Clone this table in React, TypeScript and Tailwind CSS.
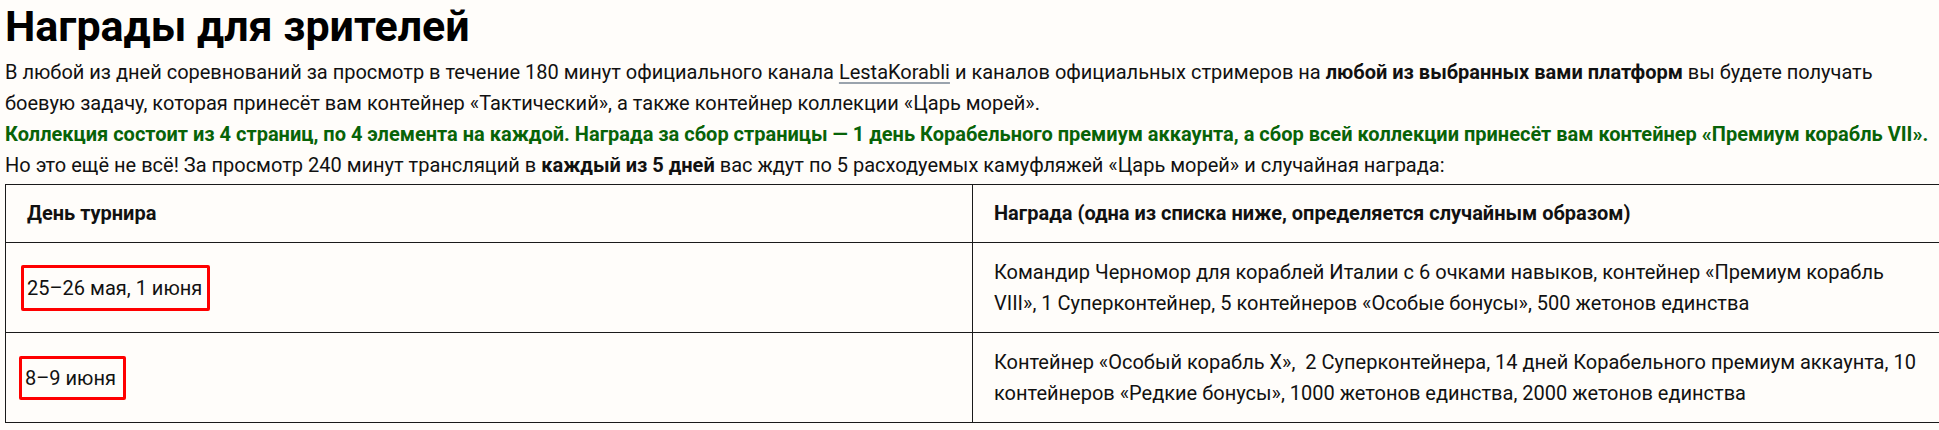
import React from "react";

export default function App() {
  return (
    <div className="w-[1939px] h-[430px] overflow-hidden bg-[#fffdfa] text-[#111111] pl-[5px]" style={{ fontFamily: "Roboto, 'Noto Sans', sans-serif" }}>
      <h1 className="text-[43px] leading-[52px] font-bold text-black m-0">Награды для зрителей</h1>
      <div className="mt-[5px] text-[20px] leading-[31px]">
        <p>
          В любой из дней соревнований за просмотр в течение 180 минут официального канала{" "}
          <a className="underline decoration-[#9aa3ad] underline-offset-[3px]">LestaKorabli</a> и каналов официальных стримеров на{" "}
          <b className="font-bold">любой из выбранных вами платформ</b> вы будете получать боевую задачу, которая принесёт вам контейнер «Тактический», а также контейнер коллекции «Царь морей».
        </p>
        <p className="font-bold text-[#086308]">
          Коллекция состоит из 4 страниц, по 4 элемента на каждой. Награда за сбор страницы — 1 день Корабельного премиум аккаунта, а сбор всей коллекции принесёт вам контейнер «Премиум корабль VII».
        </p>
        <p>
          Но это ещё не всё! За просмотр 240 минут трансляций в <b className="font-bold">каждый из 5 дней</b> вас ждут по 5 расходуемых камуфляжей «Царь морей» и случайная награда:
        </p>
      </div>
      <table className="mt-[3px] w-[1940px] border-collapse text-[20px] leading-[31px] table-fixed">
        <thead>
          <tr>
            <th className="w-[967px] border border-[#1a1a1a] text-left font-bold px-[21px] py-[13px]">День турнира</th>
            <th className="border border-[#1a1a1a] text-left font-bold px-[21px] py-[13px]">Награда (одна из списка ниже, определяется случайным образом)</th>
          </tr>
        </thead>
        <tbody>
          <tr>
            <td className="border border-[#1a1a1a] pl-[15px] pr-[21px] pt-[14px] pb-[13px] align-middle">
              <span className="inline-block border-[3px] border-[#ff0000] rounded-[2px] pl-[3px] pr-[5px] py-[5px] leading-[30px]">25–26 мая, 1 июня</span>
            </td>
            <td className="border border-[#1a1a1a] pl-[21px] pr-[21px] pt-[14px] pb-[13px]">
              Командир Черномор для кораблей Италии с 6 очками навыков, контейнер «Премиум корабль VIII», 1 Суперконтейнер, 5 контейнеров «Особые бонусы», 500 жетонов единства
            </td>
          </tr>
          <tr>
            <td className="border border-[#1a1a1a] pl-[13px] pr-[21px] pt-[14px] pb-[13px] align-middle">
              <span className="inline-block border-[3px] border-[#ff0000] rounded-[2px] pl-[3px] pr-[7px] py-[4px] leading-[30px]">8–9 июня</span>
            </td>
            <td className="border border-[#1a1a1a] pl-[21px] pr-[21px] pt-[14px] pb-[13px]">
              Контейнер «Особый корабль X»,{"\u00a0"} 2 Суперконтейнера, 14 дней Корабельного премиум аккаунта, 10 контейнеров «Редкие бонусы», 1000 жетонов единства, 2000 жетонов единства
            </td>
          </tr>
        </tbody>
      </table>
    </div>
  );
}
